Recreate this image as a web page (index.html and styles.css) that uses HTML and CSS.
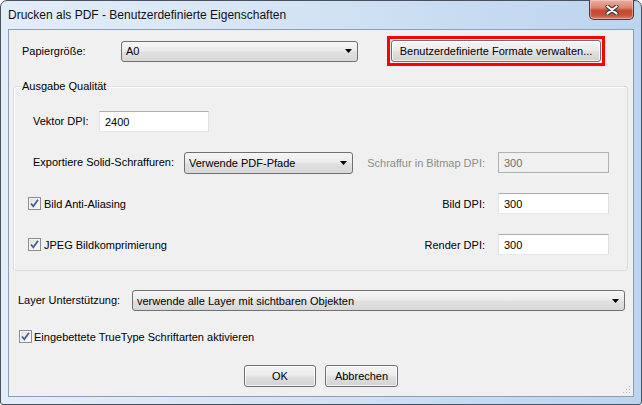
FILE: index.html
```html
<!DOCTYPE html>
<html lang="de">
<head>
<meta charset="utf-8">
<title>Drucken als PDF - Benutzerdefinierte Eigenschaften</title>
<link rel="stylesheet" href="styles.css">
</head>
<body>
<div class="window">
  <div class="titlebar">
    <span class="title">Drucken als PDF - Benutzerdefinierte Eigenschaften</span>
    <div class="close">
      <svg width="14" height="10" viewBox="0 0 14 10">
        <path d="M2.5 1.5 L11.5 8.5 M11.5 1.5 L2.5 8.5" stroke="#3b3b3b" stroke-width="4.2" stroke-linecap="round" fill="none"/>
        <path d="M2.5 1.5 L11.5 8.5 M11.5 1.5 L2.5 8.5" stroke="#ffffff" stroke-width="2.2" stroke-linecap="round" fill="none"/>
      </svg>
    </div>
  </div>
  <div class="client">
    <div class="row-paper">
      <span class="lbl lbl-paper">Papiergröße:</span>
      <div class="combo combo-paper"><span>A0</span><svg class="arrow" width="7" height="4" viewBox="0 0 7 4"><polygon points="0,0 7,0 3.5,4" fill="#000"/></svg></div>
      <div class="highlight"><div class="btn btn-formats">Benutzerdefinierte Formate verwalten...</div></div>
    </div>

    <div class="group">
      <span class="legend">Ausgabe Qualität</span>
      <div class="grid">
        <div class="cell indent">
          <span class="lbl lbl-vektor">Vektor DPI:</span>
          <div class="field field-vektor">2400</div>
        </div>
        <div></div>
        <div></div>

        <div class="cell indent">
          <span class="lbl lbl-export">Exportiere Solid-Schraffuren:</span>
          <div class="combo combo-export"><span>Verwende PDF-Pfade</span><svg class="arrow" width="7" height="4" viewBox="0 0 7 4"><polygon points="0,0 7,0 3.5,4" fill="#000"/></svg></div>
        </div>
        <span class="rlbl disabled">Schraffur in Bitmap DPI:</span>
        <div class="field field-disabled">300</div>

        <div class="cell">
          <span class="check"><svg width="11" height="11" viewBox="0 0 11 11"><path d="M2 5.5 L4.3 8.3 L9 1.8" stroke="#4a5d98" stroke-width="1.8" fill="none"/></svg></span>
          <span class="check-text">Bild Anti-Aliasing</span>
        </div>
        <span class="rlbl">Bild DPI:</span>
        <div class="field">300</div>

        <div class="cell">
          <span class="check"><svg width="11" height="11" viewBox="0 0 11 11"><path d="M2 5.5 L4.3 8.3 L9 1.8" stroke="#4a5d98" stroke-width="1.8" fill="none"/></svg></span>
          <span class="check-text">JPEG Bildkomprimierung</span>
        </div>
        <span class="rlbl">Render DPI:</span>
        <div class="field">300</div>
      </div>
    </div>

    <div class="row-layer">
      <span class="lbl lbl-layer">Layer Unterstützung:</span>
      <div class="combo combo-layer"><span>verwende alle Layer mit sichtbaren Objekten</span><svg class="arrow" width="7" height="4" viewBox="0 0 7 4"><polygon points="0,0 7,0 3.5,4" fill="#000"/></svg></div>
    </div>

    <div class="row-truetype">
      <span class="check"><svg width="11" height="11" viewBox="0 0 11 11"><path d="M2 5.5 L4.3 8.3 L9 1.8" stroke="#4a5d98" stroke-width="1.8" fill="none"/></svg></span>
      <span class="check-text tt">Eingebettete TrueType Schriftarten aktivieren</span>
    </div>

    <div class="row-buttons">
      <div class="btn btn-ok">OK</div>
      <div class="btn btn-cancel">Abbrechen</div>
    </div>

    <svg class="grip" width="8" height="8" viewBox="0 0 8 8">
      <rect x="6" y="0" width="1" height="1" fill="#b8b8b8"/>
      <rect x="3" y="3" width="1" height="1" fill="#b8b8b8"/>
      <rect x="6" y="3" width="1" height="1" fill="#b8b8b8"/>
      <rect x="0" y="6" width="1" height="1" fill="#b8b8b8"/>
      <rect x="3" y="6" width="1" height="1" fill="#b8b8b8"/>
      <rect x="6" y="6" width="1" height="1" fill="#b8b8b8"/>
    </svg>
  </div>
</div>
</body>
</html>
```

FILE: styles.css
```css
html, body {
  margin: 0;
  padding: 0;
  background: #ffffff;
}

body {
  font-family: "Liberation Sans", Arial, sans-serif;
  font-size: 11px;
  color: #000;
}

.window {
  width: 642px;
  height: 405px;
  box-sizing: border-box;
  border: 1px solid #48515d;
  border-radius: 7px 7px 3px 3px;
  background: linear-gradient(90deg, #e3edf8 0%, #d6e5f5 40%, #c6dbf1 75%, #bcd4ee 100%);
  padding: 0 7px 7px 7px;
  display: flex;
  flex-direction: column;
}

.titlebar {
  height: 28px;
  display: flex;
  justify-content: space-between;
  align-items: flex-start;
  flex-shrink: 0;
}

.title {
  margin-top: 7px;
  font-size: 12px;
  line-height: 15px;
  color: #111;
}

.close {
  width: 45px;
  height: 20px;
  box-sizing: border-box;
  margin-top: -1px;
  border: 1px solid #6e2c22;
  border-top: none;
  border-radius: 0 0 5px 5px;
  background: linear-gradient(#eab0a3 0%, #dc8571 40%, #c54a31 55%, #c65438 80%, #d9806a 100%);
  box-shadow: inset 0 0 0 1px rgba(255, 220, 210, 0.45);
  display: flex;
  align-items: center;
  justify-content: center;
}

.client {
  flex: 1;
  position: relative;
  background: #f0f0f0;
  border: 1px solid #8d9fb6;
  padding: 0 4px;
}

.lbl {
  line-height: 13px;
  white-space: nowrap;
}

/* combo boxes */
.combo {
  box-sizing: border-box;
  height: 21px;
  border: 1px solid #707070;
  border-radius: 3px;
  background: linear-gradient(#f6f6f6 0%, #ececec 45%, #e0e0e0 55%, #d8d8d8 100%);
  display: flex;
  align-items: center;
  justify-content: space-between;
  padding: 0 5px 0 4px;
  white-space: nowrap;
}

.combo .arrow {
  flex-shrink: 0;
}

/* buttons */
.btn {
  box-sizing: border-box;
  height: 22px;
  border: 1px solid #707070;
  border-radius: 3px;
  background: linear-gradient(#f4f4f4 0%, #ececec 45%, #dfdfdf 55%, #d2d2d2 100%);
  box-shadow: inset 0 0 0 1px rgba(255, 255, 255, 0.7);
  display: flex;
  align-items: center;
  justify-content: center;
  white-space: nowrap;
}

/* text fields */
.field {
  box-sizing: border-box;
  height: 21px;
  background: #fff;
  border: 1px solid;
  border-color: #abadb3 #dbdfe6 #e3e9ef #e2e3ea;
  display: flex;
  align-items: center;
  padding-left: 5px;
}

.field-disabled {
  background: #f0f0f0;
  border-color: #adb2b5;
  color: #6d6d6d;
}

/* row 1 */
.row-paper {
  display: flex;
  align-items: center;
  margin-top: 6px;
  padding-left: 9px;
  height: 30px;
}

.lbl-paper {
  width: 99px;
}

.combo-paper {
  width: 237px;
}

.highlight {
  margin-left: 29px;
  border: 3px solid #ff0000;
  padding: 1px;
}

.btn-formats {
  width: 210px;
}

/* group box */
.group {
  position: relative;
  margin-top: 20px;
  width: 615px;
  box-sizing: border-box;
  border: 1px solid #d5dfe5;
  border-radius: 3px;
  box-shadow: inset 1px 1px 0 #ffffff;
  padding: 24px 18px 15px 14px;
}

.legend {
  position: absolute;
  top: -7px;
  left: 7px;
  padding: 0 1px;
  line-height: 13px;
  background: #f0f0f0;
}

.grid {
  display: grid;
  grid-template-columns: 1fr auto 111px;
  column-gap: 13px;
  row-gap: 20px;
  grid-auto-rows: 21px;
  align-items: center;
}

.cell {
  display: flex;
  align-items: center;
  height: 21px;
}

.indent {
  padding-left: 5px;
}

.lbl-vektor {
  width: 66px;
}

.field-vektor {
  width: 110px;
}

.lbl-export {
  width: 151px;
}

.combo-export {
  width: 169px;
  height: 22px;
}

.rlbl {
  text-align: right;
  white-space: nowrap;
}

.disabled {
  color: #8d8d8d;
}

/* checkbox */
.check {
  box-sizing: border-box;
  width: 13px;
  height: 13px;
  border: 1px solid #8e8f8f;
  background: linear-gradient(135deg, #dcdcdc 0%, #f4f4f4 60%, #ffffff 100%);
  box-shadow: inset 0 0 0 1px #f4f4f4;
  display: flex;
  align-items: center;
  justify-content: center;
  flex-shrink: 0;
}

.check-text {
  margin-left: 3px;
  white-space: nowrap;
}

.check-text.tt {
  margin-left: 2px;
}

/* layer row */
.row-layer {
  display: flex;
  align-items: center;
  margin-top: 19px;
  padding-left: 5px;
}

.lbl-layer {
  width: 114px;
}

.combo-layer {
  width: 493px;
}

/* truetype row */
.row-truetype {
  display: flex;
  align-items: center;
  margin-top: 19px;
  padding-left: 6px;
  height: 13px;
}

/* buttons row */
.row-buttons {
  display: flex;
  justify-content: center;
  gap: 9px;
  margin-top: 22px;
}

.btn-ok {
  width: 72px;
}

.btn-cancel {
  width: 73px;
}

.grip {
  position: absolute;
  right: 2px;
  bottom: 2px;
}
```
